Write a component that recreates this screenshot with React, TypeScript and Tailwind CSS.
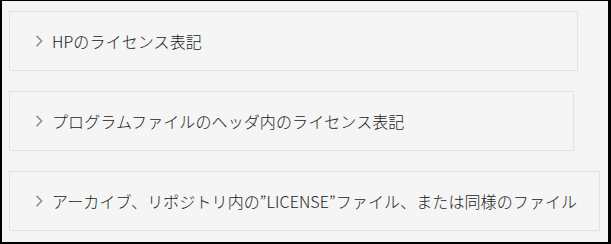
import React from 'react';

const items = [
  { label: 'HPのライセンス表記', width: 'w-[569px]' },
  { label: 'プログラムファイルのヘッダ内のライセンス表記', width: 'w-[565px]' },
  { label: 'アーカイブ、リポジトリ内の”LICENSE”ファイル、または同様のファイル', width: 'w-[591px]' },
];

const Chevron = () => (
  <svg width="8" height="12" viewBox="0 0 8 12" className="shrink-0">
    <path d="M1.5 0.8 L6.6 6 L1.5 11.2" fill="none" stroke="#8a8a8a" strokeWidth="1.5" />
  </svg>
);

const App: React.FC = () => {
  return (
    <div className="w-[611px] h-[244px] bg-[#f4f4f4] border-black border-t border-l-2 border-r-[3px] border-b-2 pt-[10px] pl-[7px] flex flex-col gap-5 font-['Noto_Sans_CJK_JP','Noto_Sans',sans-serif]">
      {items.map((item) => (
        <div
          key={item.label}
          className={`${item.width} h-[60px] border border-[#e2e2e2] bg-[#f5f5f5] flex items-center pl-[25px] gap-[9px]`}
        >
          <Chevron />
          <span className="text-[16px] text-[#222] font-light leading-none tracking-[0.1px] whitespace-nowrap">{item.label}</span>
        </div>
      ))}
    </div>
  );
};

export default App;
